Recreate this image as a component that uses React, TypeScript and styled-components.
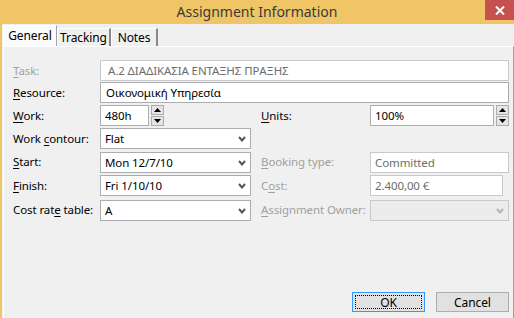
import React from "react";
import styled, { createGlobalStyle } from "styled-components";

const Global = createGlobalStyle`
  html, body { margin: 0; padding: 0; }
  body {
    width: 514px;
    height: 318px;
    overflow: hidden;
    background: #f0c566;
    font-family: "Noto Sans", "Open Sans", sans-serif;
    font-size: 11.5px;
    letter-spacing: -0.1px;
  }
`;

const Window = styled.div`
  width: 514px;
  height: 318px;
  display: flex;
  flex-direction: column;
  background: #f0c566;
  overflow: hidden;
`;

const TitleBar = styled.div`
  height: 24px;
  flex: none;
  display: grid;
  grid-template-columns: 1fr auto 1fr;
  align-items: start;
`;

const Title = styled.div`
  grid-column: 2;
  font-size: 14px;
  letter-spacing: 0;
  line-height: 24px;
  color: #3a3a3a;
`;

const Close = styled.div`
  grid-column: 3;
  justify-self: end;
  width: 29px;
  height: 20px;
  background: #c75050;
  display: flex;
  align-items: center;
  justify-content: center;
`;

const Body = styled.div`
  flex: 1;
  margin-left: 2px;
  background: #f0f0f0;
  display: flex;
  flex-direction: column;
  padding-left: 1px;
`;

const TabStrip = styled.div`
  height: 22px;
  flex: none;
  display: flex;
  align-items: flex-end;
`;

const Tab = styled.div<{ $active?: boolean; $w: number }>`
  width: ${(p) => p.$w}px;
  height: ${(p) => (p.$active ? 21 : 18)}px;
  box-sizing: border-box;
  background: ${(p) => (p.$active ? "#fbfbfb" : "#f0f0f0")};
  border-top: 1px solid #ffffff;
  border-left: 1px solid #ffffff;
  border-right: ${(p) => (p.$active ? "1px solid #a0a0a0" : "2px solid #8a8a8a")};
  display: flex;
  align-items: center;
  justify-content: center;
  color: #000;
  font-size: 12px;
  padding-bottom: ${(p) => (p.$active ? 2 : 0)}px;
  position: relative;
  z-index: ${(p) => (p.$active ? 1 : 0)};
`;

const Panel = styled.div`
  flex: none;
  height: 400px;
  box-sizing: border-box;
  border-top: 1px solid #ffffff;
  border-left: 1px solid #ffffff;
  border-right: 1px solid #a0a0a0;
  padding: 14px 0 0 9px;
  display: flex;
  flex-direction: column;
`;

const Form = styled.div`
  display: grid;
  grid-template-columns: 87px 151px 10px 109px 139px;
  grid-template-rows: 20px 20px 21px 21px 22px 21px 23px;
  row-gap: 2px;
  align-items: end;
`;

const Label = styled.div<{ $disabled?: boolean; $col?: number }>`
  grid-column: ${(p) => p.$col ?? 1};
  align-self: center;
  color: ${(p) => (p.$disabled ? "#a0a0a0" : "#000")};
  white-space: nowrap;
  line-height: 16px;
`;

const U = styled.span`
  text-decoration: underline;
  text-underline-offset: 2px;
`;

const Field = styled.div<{
  $span?: string;
  $disabled?: boolean;
  $width?: number;
  $pad?: number;
  $bg?: string;
}>`
  grid-column: ${(p) => p.$span ?? "2"};
  width: ${(p) => (p.$width ? `${p.$width}px` : "auto")};
  height: 21px;
  box-sizing: border-box;
  border: 1px solid ${(p) => (p.$disabled ? "#c9c9c9" : "#abadb3")};
  background: ${(p) => p.$bg ?? "#ffffff"};
  color: ${(p) => (p.$disabled ? "#6d6d6d" : "#000")};
  padding-left: ${(p) => p.$pad ?? 4}px;
  display: flex;
  align-items: center;
  white-space: nowrap;
  overflow: hidden;
`;

const SpinRow = styled.div<{ $col: string }>`
  grid-column: ${(p) => p.$col};
  display: flex;
  gap: 2px;
  height: 21px;
`;

const SpinInput = styled.div<{ $w: number }>`
  width: ${(p) => p.$w}px;
  height: 21px;
  box-sizing: border-box;
  border: 1px solid #abadb3;
  background: #fff;
  padding-left: 4px;
  display: flex;
  align-items: center;
`;

const Spinner = styled.div`
  width: 13px;
  display: flex;
  flex-direction: column;
  gap: 1px;
`;

const SpinBtn = styled.div`
  flex: 1;
  box-sizing: border-box;
  border: 1px solid #acacac;
  background: #e5e5e5;
  display: flex;
  align-items: center;
  justify-content: center;
`;

const Combo = styled(Field)`
  justify-content: space-between;
  padding-right: 4px;
`;

const Chevron = ({ color = "#555" }: { color?: string }) => (
  <svg width="8" height="6" viewBox="0 0 8 6">
    <polyline points="1,1 4,4.5 7,1" fill="none" stroke={color} strokeWidth="2" />
  </svg>
);

const Up = () => (
  <svg width="7" height="4" viewBox="0 0 7 4">
    <polygon points="0,4 3.5,0 7,4" fill="#000" />
  </svg>
);
const Down = () => (
  <svg width="7" height="4" viewBox="0 0 7 4">
    <polygon points="0,0 3.5,4 7,0" fill="#000" />
  </svg>
);

const Footer = styled.div`
  margin-top: 71px;
  display: flex;
  justify-content: flex-end;
  gap: 11px;
  padding-right: 4px;
`;

const Button = styled.div<{ $default?: boolean }>`
  width: 73px;
  height: 20px;
  box-sizing: border-box;
  border: 1px solid ${(p) => (p.$default ? "#3399ff" : "#adadad")};
  background: #e1e1e1;
  padding: 2px;
  display: flex;
`;

const ButtonFace = styled.div<{ $focus?: boolean }>`
  flex: 1;
  border: 1px dotted ${(p) => (p.$focus ? "#000" : "transparent")};
  display: flex;
  align-items: center;
  justify-content: center;
  color: #000;
  font-size: 12px;
`;

const Spin = ({ col, w, value }: { col: string; w: number; value: string }) => (
  <SpinRow $col={col}>
    <SpinInput $w={w}>{value}</SpinInput>
    <Spinner>
      <SpinBtn>
        <Up />
      </SpinBtn>
      <SpinBtn>
        <Down />
      </SpinBtn>
    </Spinner>
  </SpinRow>
);

export default function App() {
  return (
    <>
      <Global />
      <Window>
        <TitleBar>
          <Title>Assignment Information</Title>
          <Close>
            <svg width="10" height="9" viewBox="0 0 10 9">
              <path d="M1 0.5 L9 8.5 M9 0.5 L1 8.5" stroke="#fff" strokeWidth="2" />
            </svg>
          </Close>
        </TitleBar>
        <Body>
          <TabStrip>
            <Tab $active $w={54}>General</Tab>
            <Tab $w={54}>Tracking</Tab>
            <Tab $w={47}>Notes</Tab>
          </TabStrip>
          <Panel>
            <Form>
              <Label $disabled>
                <U>T</U>ask:
              </Label>
              <Field $span="2 / 6" $disabled $pad={7}>
                Α.2 ΔΙΑΔΙΚΑΣΙΑ ΕΝΤΑΞΗΣ ΠΡΑΞΗΣ
              </Field>

              <Label>
                <U>R</U>esource:
              </Label>
              <Field $span="2 / 6" $pad={5}>
                Οικονομική Υπηρεσία
              </Field>

              <Label>
                <U>W</U>ork:
              </Label>
              <Spin col="2" w={49} value="480h" />
              <Label $col={4}>
                <U>U</U>nits:
              </Label>
              <Spin col="5" w={124} value="100%" />

              <Label>
                Work <U>c</U>ontour:
              </Label>
              <Combo>
                Flat
                <Chevron />
              </Combo>

              <Label>
                <U>S</U>tart:
              </Label>
              <Combo>
                Mon 12/7/10
                <Chevron />
              </Combo>
              <Label $col={4} $disabled>
                <U>B</U>ooking type:
              </Label>
              <Field $span="5" $disabled>
                Committed
              </Field>

              <Label>
                <U>F</U>inish:
              </Label>
              <Combo>
                Fri 1/10/10
                <Chevron />
              </Combo>
              <Label $col={4} $disabled>
                C<U>o</U>st:
              </Label>
              <Field $span="5" $disabled $width={133}>
                2.400,00 €
              </Field>

              <Label>
                Cost rat<U>e</U> table:
              </Label>
              <Combo>
                A
                <Chevron />
              </Combo>
              <Label $col={4} $disabled>
                <U>A</U>ssignment Owner:
              </Label>
              <Combo $span="5" $disabled $bg="#ececec">
                <span />
                <Chevron color="#b5b5b5" />
              </Combo>
            </Form>
            <Footer>
              <Button $default>
                <ButtonFace $focus>OK</ButtonFace>
              </Button>
              <Button>
                <ButtonFace>Cancel</ButtonFace>
              </Button>
            </Footer>
          </Panel>
        </Body>
      </Window>
    </>
  );
}
